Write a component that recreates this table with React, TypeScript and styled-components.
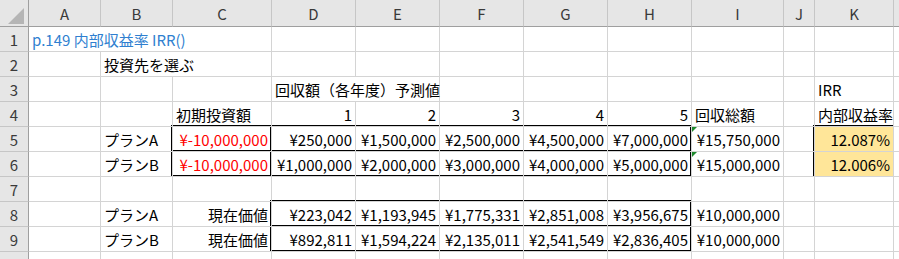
import React from 'react';
import styled, { createGlobalStyle } from 'styled-components';

const GlobalStyle = createGlobalStyle`
  html, body {
    margin: 0;
    padding: 0;
    background: #ffffff;
    overflow: hidden;
  }
  body {
    font-family: "Noto Sans CJK JP", "Noto Sans", sans-serif;
  }
`;

const COLS = ['A', 'B', 'C', 'D', 'E', 'F', 'G', 'H', 'I', 'J', 'K', 'L'];
const ROW_COUNT = 10;

const GRID = '#d4d4d4';
const HEAD_BG = '#e6e6e6';
const HEAD_LINE = '#c6c6c6';
const HEAD_EDGE = '#9f9f9f';

const Sheet = styled.div`
  display: grid;
  grid-template-columns: 29px 72px 72px 99px 84px 84px 84px 84px 84px 92px 31px 79px 1fr;
  grid-template-rows: 27px repeat(${ROW_COUNT}, 25px);
  width: 899px;
  height: 259px;
  overflow: hidden;
  font-family: "Noto Sans CJK JP", "Noto Sans", sans-serif;
  font-size: 15px;
  font-weight: 400;
  color: #000;
  background: #fff;
`;

const Corner = styled.div`
  grid-row: 1;
  grid-column: 1;
  position: relative;
  background: ${HEAD_BG};
  border-right: 1px solid ${HEAD_EDGE};
  border-bottom: 1px solid ${HEAD_EDGE};
  &::after {
    content: '';
    position: absolute;
    left: 8px;
    top: 8px;
    width: 16px;
    height: 16px;
    background: #b5b5b5;
    clip-path: polygon(100% 0, 100% 100%, 0 100%);
  }
`;

const ColHeader = styled.div<{ $col: number }>`
  grid-row: 1;
  grid-column: ${(p) => p.$col};
  display: flex;
  align-items: center;
  justify-content: center;
  background: ${HEAD_BG};
  border-right: 1px solid ${HEAD_LINE};
  border-bottom: 1px solid ${HEAD_EDGE};
  color: #3a3a3a;
  padding-top: 1px;
`;

const RowHeader = styled.div<{ $row: number }>`
  grid-row: ${(p) => p.$row};
  grid-column: 1;
  display: flex;
  align-items: center;
  justify-content: center;
  background: ${HEAD_BG};
  border-right: 1px solid ${HEAD_EDGE};
  border-bottom: 1px solid ${HEAD_LINE};
  color: #3a3a3a;
`;

const Cell = styled.div<{
  $row: number;
  $col: number;
  $span: number;
  $align: 'left' | 'right';
  $color: string;
  $fill?: string;
  $flag?: boolean;
}>`
  grid-row: ${(p) => p.$row};
  grid-column: ${(p) => p.$col} / span ${(p) => p.$span};
  position: relative;
  display: flex;
  align-items: center;
  justify-content: ${(p) => (p.$align === 'right' ? 'flex-end' : 'flex-start')};
  padding: 0 3px 0 3px;
  white-space: nowrap;
  color: ${(p) => p.$color};
  background: ${(p) => p.$fill ?? 'transparent'};
  border-right: 1px solid ${GRID};
  border-bottom: 1px solid ${GRID};
  &::before {
    content: '';
    display: ${(p) => (p.$flag ? 'block' : 'none')};
    position: absolute;
    left: 0;
    top: 0;
    width: 0;
    height: 0;
    border-top: 5px solid #1e8a2e;
    border-right: 5px solid transparent;
  }
`;

const Frame = styled.div<{
  $rows: string;
  $cols: string;
  $t?: boolean;
  $r?: boolean;
  $b?: boolean;
  $l?: boolean;
}>`
  grid-row: ${(p) => p.$rows};
  grid-column: ${(p) => p.$cols};
  margin: -2px 0 0 -2px;
  pointer-events: none;
  border-style: solid;
  border-color: #000;
  border-top-width: ${(p) => (p.$t ? '2px' : '0')};
  border-right-width: ${(p) => (p.$r ? '2px' : '0')};
  border-bottom-width: ${(p) => (p.$b ? '2px' : '0')};
  border-left-width: ${(p) => (p.$l ? '2px' : '0')};
`;

type CellDef = {
  col: string;
  text: string;
  span?: number;
  align?: 'left' | 'right';
  color?: string;
  fill?: string;
  flag?: boolean;
};

const BLUE = '#2f7fd0';
const RED = '#ff0000';
const YELLOW = '#ffe699';

const L = (col: string, text: string, extra: Partial<CellDef> = {}): CellDef => ({ col, text, align: 'left', ...extra });
const R = (col: string, text: string, extra: Partial<CellDef> = {}): CellDef => ({ col, text, align: 'right', ...extra });

const money = (vals: string[]): CellDef[] => vals.map((v, i) => R(COLS[3 + i], v));

const DATA: Record<number, CellDef[]> = {
  1: [L('A', 'p.149 内部収益率 IRR()', { span: 3, color: BLUE })],
  2: [L('B', '投資先を選ぶ', { span: 2 })],
  3: [L('D', '回収額（各年度）予測値', { span: 2 }), L('K', 'IRR')],
  4: [
    L('C', '初期投資額'),
    R('D', '1'),
    R('E', '2'),
    R('F', '3'),
    R('G', '4'),
    R('H', '5'),
    L('I', '回収総額'),
    L('K', '内部収益率'),
  ],
  5: [
    L('B', 'プランA'),
    R('C', '¥-10,000,000', { color: RED }),
    ...money(['¥250,000', '¥1,500,000', '¥2,500,000', '¥4,500,000', '¥7,000,000']),
    R('I', '¥15,750,000', { flag: true }),
    R('K', '12.087%', { fill: YELLOW }),
  ],
  6: [
    L('B', 'プランB'),
    R('C', '¥-10,000,000', { color: RED }),
    ...money(['¥1,000,000', '¥2,000,000', '¥3,000,000', '¥4,000,000', '¥5,000,000']),
    R('I', '¥15,000,000', { flag: true }),
    R('K', '12.006%', { fill: YELLOW }),
  ],
  8: [
    L('B', 'プランA'),
    R('C', '現在価値'),
    ...money(['¥223,042', '¥1,193,945', '¥1,775,331', '¥2,851,008', '¥3,956,675']),
    R('I', '¥10,000,000'),
  ],
  9: [
    L('B', 'プランB'),
    R('C', '現在価値'),
    ...money(['¥892,811', '¥1,594,224', '¥2,135,011', '¥2,541,549', '¥2,836,405']),
    R('I', '¥10,000,000'),
  ],
};

function buildRow(row: number) {
  const defs = DATA[row] ?? [];
  const out: React.ReactNode[] = [];
  let c = 0;
  while (c < COLS.length) {
    const def = defs.find((d) => d.col === COLS[c]);
    const span = def?.span ?? 1;
    out.push(
      <Cell
        key={`${row}-${c}`}
        $row={row + 1}
        $col={c + 2}
        $span={span}
        $align={def?.align ?? 'left'}
        $color={def?.color ?? '#000'}
        $fill={def?.fill}
        $flag={def?.flag}
      >
        {def?.text ?? ''}
      </Cell>
    );
    c += span;
  }
  return out;
}

export default function App() {
  const rows = Array.from({ length: ROW_COUNT }, (_, i) => i + 1);
  return (
    <>
      <GlobalStyle />
      <Sheet>
        <Corner />
        {COLS.map((c, i) => (
          <ColHeader key={c} $col={i + 2}>
            {c === 'L' ? '' : c}
          </ColHeader>
        ))}
        {rows.map((r) => (
          <RowHeader key={`rh-${r}`} $row={r + 1}>
            {r}
          </RowHeader>
        ))}
        {rows.map((r) => buildRow(r))}

        {/* C5:H6 block */}
        <Frame $rows="6 / 8" $cols="4 / 10" $t $r $b $l />
        <Frame $rows="7 / 8" $cols="4 / 10" $t />
        <Frame $rows="6 / 8" $cols="4 / 5" $r />

        {/* D8:H9 block */}
        <Frame $rows="9 / 11" $cols="5 / 10" $t $r $b $l />
        <Frame $rows="10 / 11" $cols="5 / 10" $t />

        {/* K5:K6 block */}
        <Frame $rows="6 / 8" $cols="12 / 13" $t $r $b $l />
        <Frame $rows="7 / 8" $cols="12 / 13" $t />
      </Sheet>
    </>
  );
}
